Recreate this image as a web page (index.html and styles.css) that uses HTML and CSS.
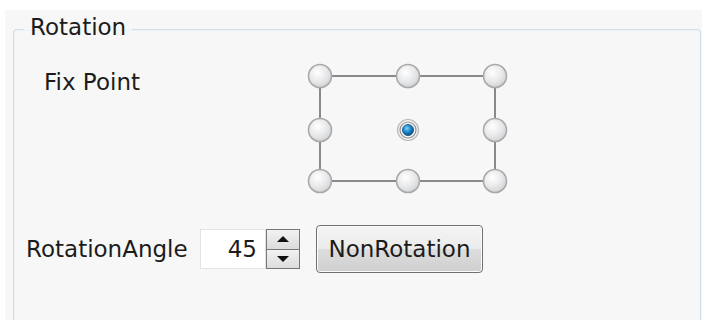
FILE: index.html
```html
<!DOCTYPE html>
<html>
<head>
    <meta charset="utf-8">
    <title>Rotation</title>
    <link rel="stylesheet" href="styles.css">
</head>
<body>
<div class="panel">
    <fieldset class="group">
        <legend>Rotation</legend>
        <div class="fixRow">
            <span class="fixLabel">Fix Point</span>
            <svg class="points" width="216" height="136" viewBox="0 0 216 136">
                <defs>
                    <radialGradient id="knob" cx="40%" cy="35%" r="70%">
                        <stop offset="0" stop-color="#ffffff"/>
                        <stop offset="0.6" stop-color="#e6e7e9"/>
                        <stop offset="1" stop-color="#cfd0d3"/>
                    </radialGradient>
                    <radialGradient id="dot" cx="40%" cy="35%" r="65%">
                        <stop offset="0" stop-color="#7fd0f5"/>
                        <stop offset="0.5" stop-color="#1d8ed0"/>
                        <stop offset="1" stop-color="#0a4f86"/>
                    </radialGradient>
                </defs>
                <rect x="15" y="13" width="175" height="105" fill="none" stroke="#8a8a8a" stroke-width="2"/>
                <!-- 8 handles round the frame -->
                <g fill="url(#knob)" stroke="#a9a9a9" stroke-width="1.6">
                    <circle cx="15" cy="13" r="11.5"/>
                    <circle cx="103" cy="13" r="11.5"/>
                    <circle cx="190" cy="13" r="11.5"/>
                    <circle cx="15" cy="67" r="11.5"/>
                    <circle cx="190" cy="67" r="11.5"/>
                    <circle cx="15" cy="118" r="11.5"/>
                    <circle cx="103" cy="118" r="11.5"/>
                    <circle cx="190" cy="118" r="11.5"/>
                </g>
                <!-- selected centre -->
                <circle cx="103" cy="67" r="10.5" fill="#f4f4f4" stroke="#b8b8b8" stroke-width="1.2"/>
                <circle cx="103" cy="67" r="8" fill="none" stroke="#8f8f8f" stroke-width="1.2"/>
                <circle cx="103" cy="67" r="5.5" fill="url(#dot)" stroke="#0b4a7c" stroke-width="0.8"/>
            </svg>
        </div>
        <div class="angleRow">
            <span class="angleLabel">RotationAngle</span>
            <div class="spin">
                <div class="spinValue">45</div>
                <div class="spinBtns">
                    <div class="spinBtn"><span class="arrowUp"></span></div>
                    <div class="spinBtn"><span class="arrowDown"></span></div>
                </div>
            </div>
            <button class="nonRot">NonRotation</button>
        </div>
    </fieldset>
</div>
</body>
</html>
```

FILE: styles.css
```css
*{
    padding: 0;
    margin: 0;
    box-sizing: border-box;
}
body{
    background: #ffffff;
    width: 702px;
    height: 320px;
    overflow: hidden;
    font-family: "DejaVu Sans", sans-serif;
    font-size: 23px;
    color: #1c1c1c;
}
.panel{
    margin-top: 10px;
    margin-left: 5px;
    height: 310px;
    background: #f7f7f7;
    padding-left: 8px;
    padding-top: 4px;
    padding-right: 1px;
}
.group{
    height: 306px;
    border: 1px solid #d3dde6;
    border-bottom: none;
    border-radius: 4px 4px 0 0;
    box-shadow: inset 1px 1px 0 #eef2f6;
    padding: 0;
}
.group legend{
    line-height: 27px;
    padding: 0 6px 3px 6px;
    margin-left: 10px;
}
.fixRow{
    display: flex;
    align-items: flex-start;
    height: 181px;
}
.fixLabel{
    line-height: 27px;
    margin-top: 25px;
    margin-left: 30px;
    width: 261px;
}
.points{
    display: block;
    margin-top: 19px;
}
.angleRow{
    display: flex;
    align-items: center;
    height: 48px;
}
.angleLabel{
    line-height: 27px;
    width: 174px;
    margin-left: 12px;
}
.spin{
    display: flex;
    height: 40px;
}
.spinValue{
    width: 66px;
    height: 40px;
    background: #ffffff;
    border: 1px solid #dfe3ea;
    line-height: 38px;
    text-align: right;
    padding-right: 8px;
}
.spinBtns{
    display: flex;
    flex-direction: column;
    width: 34px;
    height: 40px;
    border: 1px solid #777;
    background: #777;
    gap: 1px;
}
.spinBtn{
    flex: 1;
    background: linear-gradient(#f2f2f2, #dcdcdc);
    display: flex;
    align-items: center;
    justify-content: center;
}
.arrowUp, .arrowDown{
    width: 0;
    height: 0;
    border-left: 6px solid transparent;
    border-right: 6px solid transparent;
}
.arrowUp{
    border-bottom: 6px solid #111;
}
.arrowDown{
    border-top: 6px solid #111;
}
.nonRot{
    margin-left: 16px;
    width: 167px;
    height: 48px;
    font-family: "DejaVu Sans", sans-serif;
    font-size: 23px;
    color: #1c1c1c;
    border: 1px solid #707070;
    border-radius: 4px;
    background: linear-gradient(#f4f4f4 0%, #ebebeb 50%, #dddddd 51%, #cfcfcf 100%);
    box-shadow: inset 0 0 0 1px #fcfcfc;
}
```
